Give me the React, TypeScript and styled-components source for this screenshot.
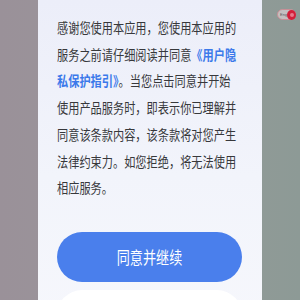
import React from "react";
import styled, { createGlobalStyle } from "styled-components";

const GlobalStyle = createGlobalStyle`
  html, body {
    margin: 0;
    padding: 0;
  }
  body {
    font-family: "Noto Sans CJK SC", "Noto Sans", sans-serif;
  }
`;

const Screen = styled.div`
  position: relative;
  width: 300px;
  height: 300px;
  overflow: hidden;
  display: flex;
  justify-content: center;
  background: linear-gradient(90deg, #9a9199 0%, #9a959a 40%, #929a97 70%, #8d9a96 100%);
`;

const Card = styled.div`
  width: 224px;
  height: 320px;
  padding: 15px 19px 0;
  box-sizing: border-box;
  display: flex;
  flex-direction: column;
  background: linear-gradient(180deg, #eceef9 0%, #f2f4fb 55%, #f6f7fc 100%);
`;

const Body = styled.p`
  margin: 0;
  font-size: 13.3px;
  line-height: 26.7px;
  color: #37383b;
  white-space: nowrap;
  transform: scaleX(0.842);
  transform-origin: left top;
`;

const Link = styled.span`
  color: #3b79ea;
  font-weight: 700;
`;

const Actions = styled.div`
  margin-top: 30px;
  display: flex;
  flex-direction: column;
  gap: 8px;
`;

const Button = styled.button<{ $primary?: boolean }>`
  height: 50px;
  width: 185px;
  padding: 0;
  border: none;
  border-radius: 25px;
  font-family: "Noto Sans CJK SC", "Noto Sans", sans-serif;
  font-size: 17px;
  color: ${(p) => (p.$primary ? "#ffffff" : "#393a3d")};
  background: ${(p) => (p.$primary ? "#4a7fec" : "#ffffff")};
`;

const ButtonLabel = styled.span`
  display: inline-block;
  transform: scaleX(0.77);
`;

const LangToggle = styled.div`
  position: absolute;
  top: 9px;
  right: 4px;
  width: 19px;
  height: 11px;
  box-sizing: border-box;
  border: 1px solid #c98e96;
  border-radius: 6px;
  background: #c4c0c1;
  display: flex;
  align-items: center;
  justify-content: space-between;
  padding-left: 2px;
`;

const LangText = styled.span`
  font-family: "Liberation Sans", sans-serif;
  font-size: 4px;
  color: #5a5a5a;
`;

const Knob = styled.span`
  width: 10px;
  height: 10px;
  margin-right: -1px;
  border-radius: 50%;
  background: #d21f3a;
  display: flex;
  align-items: center;
  justify-content: center;

  &::after {
    content: "";
    width: 4px;
    height: 4px;
    border-radius: 50%;
    background: #e8788a;
  }
`;

export default function App() {
  return (
    <>
      <GlobalStyle />
      <Screen>
        <Card>
          <Body>
            感谢您使用本应用，您使用本应用的
            <br />
            服务之前请仔细阅读并同意<Link>《用户隐
            <br />
            私保护指引》</Link>。当您点击同意并开始
            <br />
            使用产品服务时，即表示你已理解并
            <br />
            同意该条款内容，该条款将对您产生
            <br />
            法律约束力。如您拒绝，将无法使用
            <br />
            相应服务。
          </Body>
          <Actions>
            <Button $primary>
              <ButtonLabel>同意并继续</ButtonLabel>
            </Button>
            <Button aria-label="不同意" />
          </Actions>
        </Card>
        <LangToggle>
          <LangText>Eng</LangText>
          <Knob />
        </LangToggle>
      </Screen>
    </>
  );
}
